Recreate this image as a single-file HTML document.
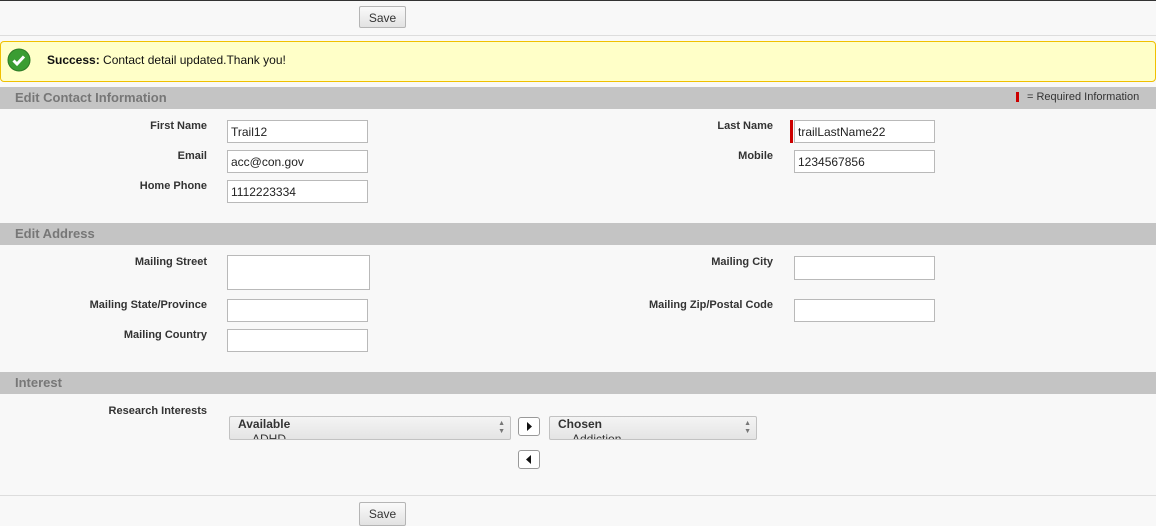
<!DOCTYPE html>
<html><head><style>
body{margin:0;width:1156px;height:526px;background:#f8f8f8;font-family:"Liberation Sans",Arial,sans-serif;position:relative;overflow:hidden}
.a{position:absolute}
.btn{position:absolute;width:47px;height:22px;border:1px solid #b5b5b5;border-radius:2px;background:linear-gradient(#fafafa,#e2e2e2);font-size:12px;color:#333;text-align:center;line-height:22px;box-sizing:border-box}
.hdr{position:absolute;left:0;width:1156px;height:22px;background:#c4c4c4;color:#777;font-weight:bold;font-size:13px;line-height:22px;padding-left:15px;box-sizing:border-box}
.lb{position:absolute;font-size:11px;color:#333;font-weight:bold;text-align:right;width:200px}
.in{position:absolute;width:141px;height:23px;border:1px solid #b9b9b9;background:#fff;box-sizing:border-box;font-size:12px;color:#222;padding:4px 0 0 3px}
.sel{position:absolute;height:24px;border:1px solid #c2c2c2;border-radius:2px;background:linear-gradient(#f4f4f4,#e4e4e4);box-sizing:border-box;overflow:hidden;font-size:12px;color:#333}
.arr{position:absolute;width:22px;height:19px;border:1px solid #999;border-radius:3px;background:#fff;box-sizing:border-box}
</style></head><body>
<div class="a" style="left:0;top:0;width:1156px;height:1px;background:#333"></div>
<div class="btn" style="left:359px;top:6px">Save</div>
<div class="a" style="left:0;top:35px;width:1156px;height:1px;background:#ddd"></div>
<div class="a" style="left:0;top:41px;width:1156px;height:41px;background:#ffffc8;border:1px solid #f0c000;border-radius:4px;box-sizing:border-box"></div>
<svg class="a" style="left:7px;top:48px" width="24" height="24"><circle cx="12" cy="12" r="11" fill="#3a9d32" stroke="#2d7a26"/><path d="M6.5 12.5l3.5 3.5 7-7.5" stroke="#fff" stroke-width="3" fill="none"/></svg>
<div class="a" style="left:47px;top:53px;font-size:12px;color:#111"><b>Success:</b> Contact detail updated.Thank you!</div>

<div class="hdr" style="top:87px">Edit Contact Information</div>
<div class="a" style="left:1016px;top:92px;width:3px;height:10px;background:#c00"></div>
<div class="a" style="left:1027px;top:91px;font-size:11px;color:#333">= Required Information</div>
<div class="lb" style="left:7px;top:120px">First Name</div>
<div class="in" style="left:227px;top:120px">Trail12</div>
<div class="lb" style="left:7px;top:150px">Email</div>
<div class="in" style="left:227px;top:150px">acc@con.gov</div>
<div class="lb" style="left:7px;top:180px">Home Phone</div>
<div class="in" style="left:227px;top:180px">1112223334</div>
<div class="lb" style="left:573px;top:120px">Last Name</div>
<div class="a" style="left:790px;top:120px;width:3px;height:23px;background:#c00"></div>
<div class="in" style="left:794px;top:120px">trailLastName22</div>
<div class="lb" style="left:573px;top:150px">Mobile</div>
<div class="in" style="left:794px;top:150px">1234567856</div>

<div class="hdr" style="top:223px">Edit Address</div>
<div class="lb" style="left:7px;top:256px">Mailing Street</div>
<div class="in" style="left:227px;top:255px;width:143px;height:35px"></div>
<div class="lb" style="left:7px;top:299px">Mailing State/Province</div>
<div class="in" style="left:227px;top:299px"></div>
<div class="lb" style="left:7px;top:329px">Mailing Country</div>
<div class="in" style="left:227px;top:329px"></div>
<div class="lb" style="left:573px;top:256px">Mailing City</div>
<div class="in" style="left:794px;top:256px;height:24px"></div>
<div class="lb" style="left:573px;top:299px">Mailing Zip/Postal Code</div>
<div class="in" style="left:794px;top:299px"></div>

<div class="hdr" style="top:372px">Interest</div>
<div class="lb" style="left:7px;top:405px">Research Interests</div>
<div class="sel" style="left:229px;top:416px;width:282px"><div style="font-weight:bold;padding:0 0 0 8px;line-height:15px">Available</div><div style="padding-left:22px">ADHD</div><div class="a" style="right:5px;top:3px;font-size:7px;color:#777;line-height:8px">▲<br>▼</div></div>
<div class="arr" style="left:518px;top:417px"><svg width="20" height="17"><path d="M8 4l5 4.5-5 4.5z" fill="#111"/></svg></div>
<div class="sel" style="left:549px;top:416px;width:208px"><div style="font-weight:bold;padding:0 0 0 8px;line-height:15px">Chosen</div><div style="padding-left:22px">Addiction</div><div class="a" style="right:5px;top:3px;font-size:7px;color:#777;line-height:8px">▲<br>▼</div></div>
<div class="arr" style="left:518px;top:450px"><svg width="20" height="17"><path d="M12 4l-5 4.5 5 4.5z" fill="#111"/></svg></div>
<div class="a" style="left:0;top:495px;width:1156px;height:1px;background:#ddd"></div>
<div class="btn" style="left:359px;top:502px;height:24px">Save</div>
</body></html>
